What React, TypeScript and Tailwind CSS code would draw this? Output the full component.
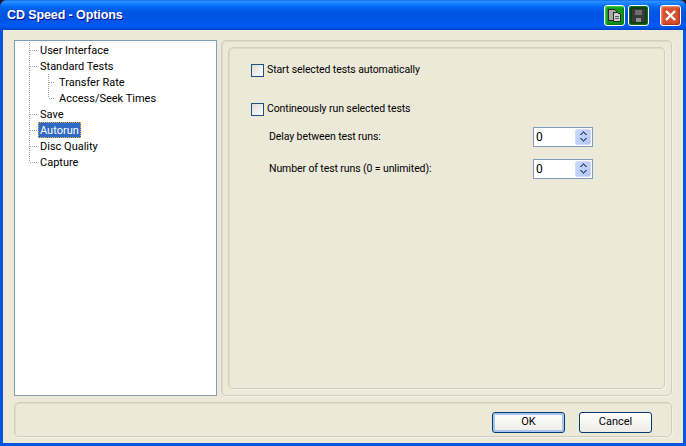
// CD Speed options dialog, XP look
import type { ReactNode } from "react";

const treeItems = [
  { label: "User Interface", depth: 0 },
  { label: "Standard Tests", depth: 0 },
  { label: "Transfer Rate", depth: 1 },
  { label: "Access/Seek Times", depth: 1, lastChild: true },
  { label: "Save", depth: 0 },
  { label: "Autorun", depth: 0, selected: true },
  { label: "Disc Quality", depth: 0 },
  { label: "Capture", depth: 0, last: true },
];

type TreeRowProps = {
  label: string;
  depth: number;
  selected?: boolean;
  last?: boolean;
  lastChild?: boolean;
};

// dotted connector lines are drawn per row so the rows stay in normal flow
function TreeRow({ label, depth, selected, last, lastChild }: TreeRowProps) {
  return (
    <div className="flex h-4 items-center">
      <svg width="40" height="16" className="shrink-0" shapeRendering="crispEdges">
        <g stroke="#a0a0a0" strokeDasharray="1 1" fill="none">
          <path d={last ? "M14.5 0V8" : "M14.5 0V16"} />
          {depth === 1 ? (
            <>
              <path d={lastChild ? "M33.5 0V8" : "M33.5 0V16"} />
              <path d="M34 8.5H41" />
            </>
          ) : (
            <path d="M15 8.5H23" />
          )}
        </g>
      </svg>
      <span
        className={
          selected
            ? "-ml-[17px] border border-dotted border-[#f0b040] bg-[#316ac5] px-px pt-px leading-[13px] text-white"
            : depth === 1
              ? "ml-[4px] pt-[2px] leading-[14px]"
              : "-ml-[15px] pt-[2px] leading-[14px]"
        }
      >
        {label}
      </span>
    </div>
  );
}

function GroupBox({ className, children }: { className: string; children?: ReactNode }) {
  return (
    <div className={`rounded-[5px] border border-[#d0cfbc] shadow-[inset_1px_1px_0_#dedbca,1px_1px_0_#f4f2e8] ${className}`}>
      {children}
    </div>
  );
}

function CheckRow({ label }: { label: string }) {
  return (
    <label className="flex h-4 items-center gap-[3px] leading-4">
      <span className="h-[13px] w-[13px] border border-[#1c5180] bg-gradient-to-br from-[#dcdcd7] to-white" />
      {label}
    </label>
  );
}

function SpinField({ label }: { label: string }) {
  return (
    <div className="flex h-5 items-center justify-between pl-[18px]">
      <span>{label}</span>
      <div className="flex h-5 w-[60px] items-center border border-[#7f9db9] bg-white pl-[2px]">
        <span className="flex-1 text-[12px]">0</span>
        <div className="m-px flex h-4 w-4 flex-col items-center justify-center gap-[2px] rounded-[2px] border border-[#cfdcfb] bg-gradient-to-br from-[#c8d8fb] to-[#b2c8f6]">
          <svg width="9" height="5" shapeRendering="crispEdges">
            <path d="M4 0h1v1h1v1h1v1h1v1H6V3H5V2H4v1H3v1H1V3h1V2h1V1h1z" fill="#4d6185" />
          </svg>
          <svg width="9" height="5" shapeRendering="crispEdges">
            <path d="M1 0h2v1h1v1h1V1h1V0h2v1H7v1H6v1H5v1H4V3H3V2H2V1H1z" fill="#4d6185" />
          </svg>
        </div>
      </div>
    </div>
  );
}

function DialogButton({ label, isDefault }: { label: string; isDefault?: boolean }) {
  return (
    <button
      type="button"
      className={`h-[21px] w-[73px] rounded-[3px] border border-[#003c74] bg-gradient-to-b from-white to-[#ecebe5] text-center text-[11px] ${
        isDefault ? "shadow-[inset_0_0_0_2px_#a9c4ee]" : ""
      }`}
    >
      {label}
    </button>
  );
}

function CaptionButton({ pressed, children }: { pressed?: boolean; children: ReactNode }) {
  return (
    <div
      className={`flex h-[21px] w-[21px] items-center justify-center rounded-[3px] border border-white ${
        pressed
          ? "bg-[#0c3a10] shadow-[inset_0_0_2px_1px_#1c7a24]"
          : "bg-[#0f9a1c] shadow-[inset_1px_1px_2px_#4fd956,inset_-1px_-1px_2px_#056a10]"
      }`}
    >
      {children}
    </div>
  );
}

export default function App() {
  return (
    <div className="h-[446px] w-[686px] overflow-hidden bg-[#1a1a2a] font-['Roboto',sans-serif] text-[11px] text-black">
      <div className="flex h-full flex-col overflow-hidden rounded-t-[7px] bg-[#0855dd]">
        {/* title bar */}
        <div className="flex h-[30px] shrink-0 items-center bg-[linear-gradient(to_bottom,#0058ee_0px,#3593ff_1px,#288eff_2px,#127dff_4px,#036ffc_6px,#0262ee_8px,#0057e5_12px,#0054e3_16px,#0055eb_22px,#005bf5_25px,#0058ec_27px,#0049ce_29px,#0043cf_30px)] pl-[7px] pr-[5px]">
          <span className="flex-1 pt-px font-['Liberation_Sans',sans-serif] text-[12.5px] font-bold tracking-[-0.1px] text-white [text-shadow:1px_1px_0_#0f1089]">
            CD Speed - Options
          </span>
          <div className="flex items-center gap-[3px]">
            <CaptionButton>
              <svg width="15" height="15" viewBox="0 0 15 15" shapeRendering="crispEdges">
                <path d="M1.5 1.5h6l2 2v9h-8z" fill="#a8a8a8" stroke="#2a2a2a" />
                <path d="M6.5 4.5h4l3 2v7h-7z" fill="#d0d0d0" stroke="#2a2a2a" />
                <path d="M8 8.5h4M8 10.5h4" stroke="#555" />
              </svg>
            </CaptionButton>
            <CaptionButton pressed>
              <svg width="15" height="15" viewBox="0 0 15 15" shapeRendering="crispEdges">
                <path d="M1 1h13v13H1z" fill="#3a3a3a" />
                <path d="M4 2h7v5H4z" fill="#6e6e6e" />
                <path d="M5 10h5v4H5z" fill="#8f8f8f" />
              </svg>
            </CaptionButton>
          </div>
          <div className="ml-[11px] flex h-[21px] w-[21px] items-center justify-center rounded-[3px] border border-white bg-[#d8502f] shadow-[inset_1px_1px_2px_#f0a08a,inset_-1px_-1px_2px_#a82a10]">
            <svg width="13" height="13" viewBox="0 0 13 13">
              <path d="M2 2l9 9M11 2l-9 9" stroke="white" strokeWidth="2.4" />
            </svg>
          </div>
        </div>

        {/* client area */}
        <div className="mx-[3px] mb-[3px] flex flex-1 flex-col gap-[6px] bg-[#ece9d8] px-[11px] pb-[6px] pt-[10px]">
          <div className="flex h-[356px] gap-1">
            <div className="w-[203px] border border-[#7f9db9] bg-white pt-px">
              {treeItems.map((item) => (
                <TreeRow key={item.label} {...item} />
              ))}
            </div>
            <GroupBox className="flex-1 p-[6px]">
              <GroupBox className="h-full pl-[22px] pr-[71px] pt-[14px] text-[10.5px] tracking-[-0.1px]">
                <CheckRow label="Start selected tests automatically" />
                <div className="mt-[23px]">
                  <CheckRow label="Contineously run selected tests" />
                </div>
                <div className="mt-[10px] flex flex-col gap-3">
                  <SpinField label="Delay between test runs:" />
                  <SpinField label="Number of test runs (0 = unlimited):" />
                </div>
              </GroupBox>
            </GroupBox>
          </div>
          <GroupBox className="flex flex-1 items-end justify-end gap-[14px] pb-[3px] pr-[19px]">
            <DialogButton label="OK" isDefault />
            <DialogButton label="Cancel" />
          </GroupBox>
        </div>
      </div>
    </div>
  );
}
